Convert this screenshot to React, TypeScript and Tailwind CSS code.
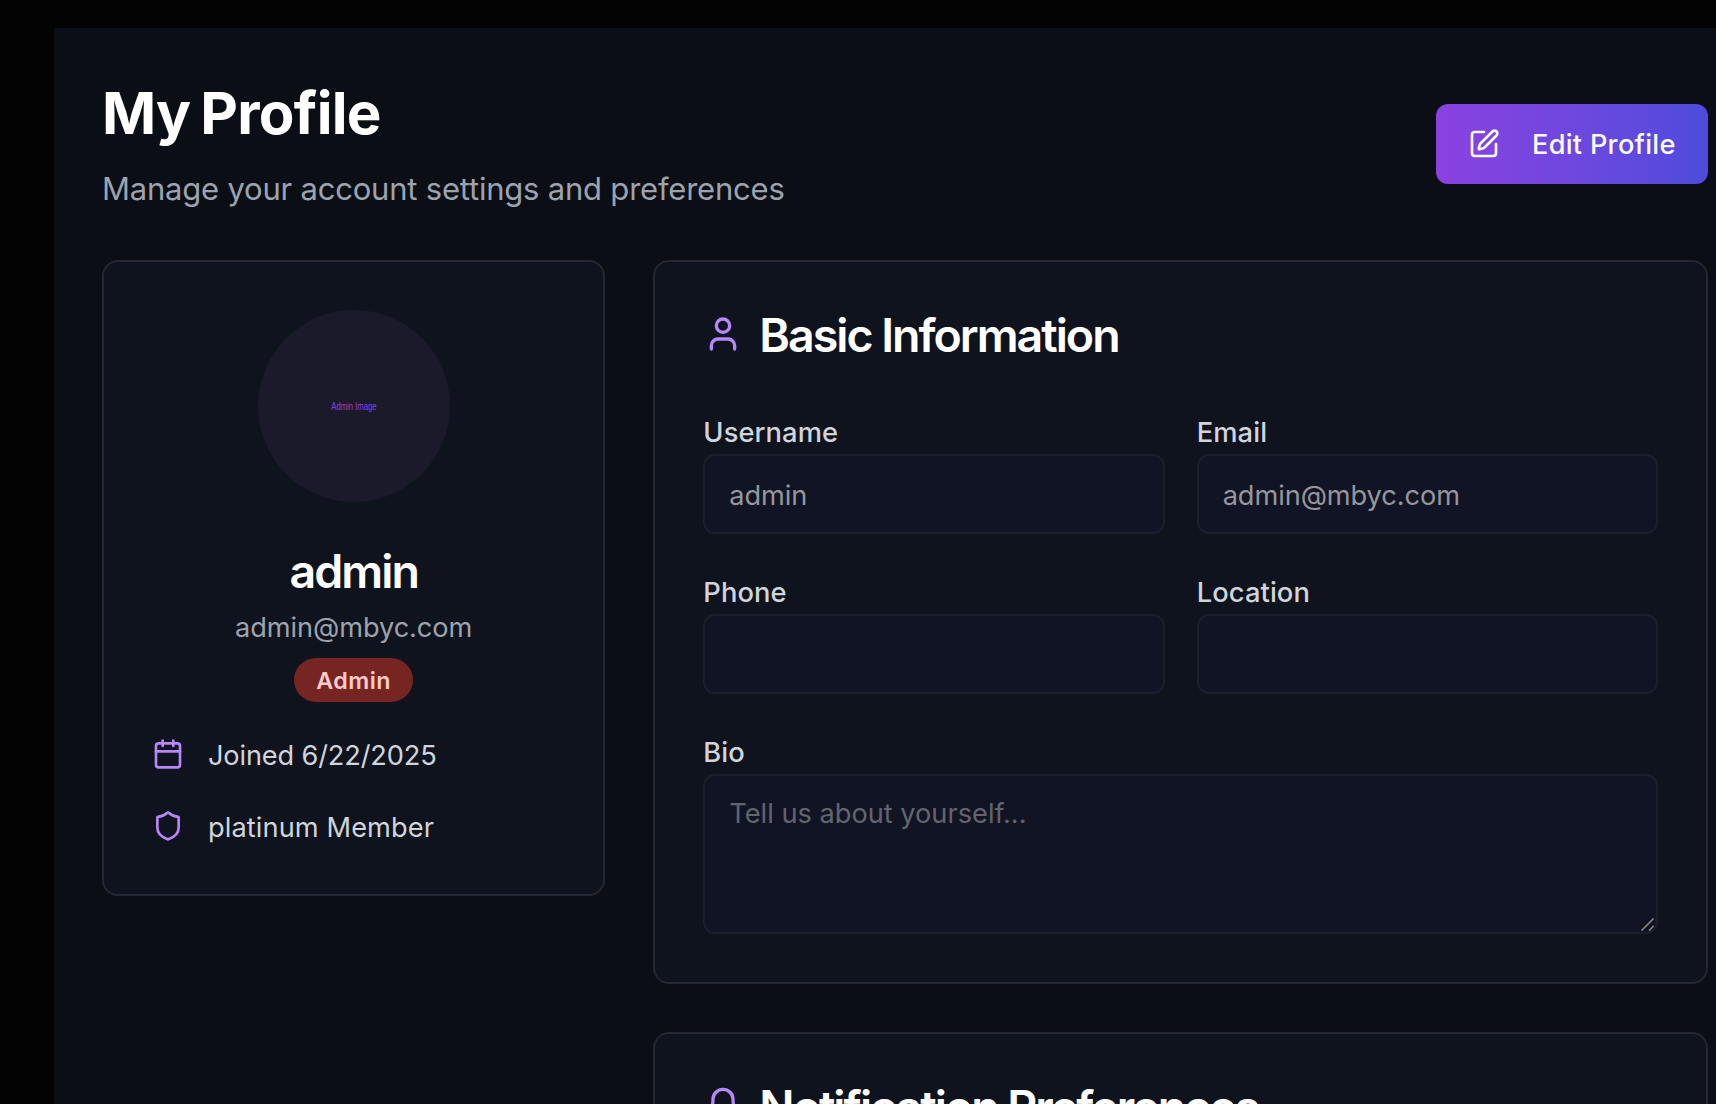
import React from "react";
import { Bell, Calendar, Shield, SquarePen, User } from "lucide-react";

function Card({ className = "", children }: { className?: string; children: React.ReactNode }) {
  return (
    <section className={`rounded-[16px] border-2 border-[#232834] bg-[#0f131d] p-12 ${className}`}>
      {children}
    </section>
  );
}

function CardTitle({ icon, children }: { icon: React.ReactNode; children: React.ReactNode }) {
  return (
    <h2 className="flex h-12 items-center gap-4 whitespace-nowrap text-[46.5px] font-semibold leading-[48px] tracking-[-2px] text-white">
      {icon}
      <span className="pt-[2px]">{children}</span>
    </h2>
  );
}

function Label({ htmlFor, children }: { htmlFor: string; children: React.ReactNode }) {
  return (
    <div className="h-12 pt-px text-[32px] leading-[48px]">
      <label
        htmlFor={htmlFor}
        className="text-[27.3px] font-medium leading-none tracking-[0.1px] text-[#d1d5db]"
      >
        {children}
      </label>
    </div>
  );
}

function Field({ id, label, value = "" }: { id: string; label: string; value?: string }) {
  return (
    <div className="min-w-0">
      <Label htmlFor={id}>{label}</Label>
      <input
        id={id}
        disabled
        value={value}
        readOnly
        className="block h-20 w-full rounded-[12px] border-2 border-[#1b1f2c] bg-[#111424] px-6 pt-[2px] text-[27.2px] leading-10 tracking-[-0.08px] text-[#96979c]"
      />
    </div>
  );
}

export default function App() {
  return (
    <div className="h-[1104px] w-full overflow-hidden bg-[#030303] pl-[54px] pt-7 font-['Inter',sans-serif]">
      <main className="h-full bg-[#0b0e15] pl-12 pr-2 pt-12">
        <header className="flex items-center justify-between">
          <div>
            <h1 className="h-[72px] pt-px text-[58.2px] font-bold leading-[72px] tracking-[-0.75px] text-white [word-spacing:-3px]">
              My Profile
            </h1>
            <p className="mt-4 h-12 pt-px text-[31px] leading-[48px] tracking-[-0.21px] text-[#9ca3af]">
              Manage your account settings and preferences
            </p>
          </div>
          <button className="flex h-20 w-[272px] items-center gap-8 whitespace-nowrap rounded-[12px] bg-linear-to-r from-[#8b41e1] to-[#4d4bdc] px-8 text-[27.2px] font-medium tracking-[0.27px] text-[#f8fafc]">
            <SquarePen size={32} className="shrink-0" />
            <span className="pt-[3px]">Edit Profile</span>
          </button>
        </header>

        <div className="mt-12 grid grid-cols-3 items-start gap-12">
          <Card>
            <div className="flex flex-col items-center">
              <div className="flex size-48 items-center justify-center rounded-full bg-[#1a1a2b]">
                <span className="scale-x-73 whitespace-nowrap font-['Liberation_Sans',sans-serif] text-[10.5px] leading-none text-[#8a3fec]">
                  Admin Image
                </span>
              </div>
              <h2 className="mt-11 h-12 pt-px text-[46.5px] font-semibold leading-[48px] tracking-[-1.95px] text-white">
                admin
              </h2>
              <p className="mt-3 h-10 pt-[2px] text-[27.2px] leading-10 tracking-[-0.08px] text-[#9ca3af]">
                admin@mbyc.com
              </p>
              <span className="mt-3 flex h-11 w-[119px] items-center justify-center rounded-full bg-[#772522] pt-[2px] text-[23.3px] font-semibold tracking-[0.45px] text-[#fecaca]">
                Admin
              </span>
            </div>
            <ul className="mt-8 flex flex-col gap-8 text-[27.2px] leading-10 text-[#d1d5db]">
              <li className="flex h-10 items-center gap-6">
                <Calendar size={32} className="text-[#b786f8]" />
                <span className="pt-[4px] tracking-[-0.16px]">Joined 6/22/2025</span>
              </li>
              <li className="flex h-10 items-center gap-6">
                <Shield size={32} className="text-[#b786f8]" />
                <span className="pt-[4px] tracking-[0.1px]">platinum Member</span>
              </li>
            </ul>
          </Card>

          <div className="col-span-2 flex flex-col gap-12">
            <Card>
              <CardTitle icon={<User size={40} className="shrink-0 text-[#b786f8]" />}>
                Basic Information
              </CardTitle>
              <div className="mt-12 flex flex-col gap-8">
                <div className="grid grid-cols-2 gap-8">
                  <Field id="username" label="Username" value="admin" />
                  <Field id="email" label="Email" value="admin@mbyc.com" />
                  <Field id="phone" label="Phone" />
                  <Field id="location" label="Location" />
                </div>
                <div>
                  <Label htmlFor="bio">Bio</Label>
                  <div className="relative">
                    <textarea
                      id="bio"
                      disabled
                      placeholder="Tell us about yourself..."
                      className="block h-40 w-full resize-none rounded-[12px] border-2 border-[#1b1f2c] bg-[#111424] px-6 pb-4 pt-[18px] text-[27.2px] leading-10 placeholder:text-[#63656d]"
                    />
                    <svg
                      className="absolute bottom-[3px] right-[3px] size-4"
                      viewBox="0 0 16 16"
                      fill="none"
                      strokeWidth="1.7"
                    >
                      <path stroke="#090a12" d="M1.2 14.8 14.2 1.8M8.7 14.8l5.5-5.5" />
                      <path stroke="#7f8084" d="M2.4 15.6 14.6 3.4M9.9 15.6l4.7-4.7" />
                    </svg>
                  </div>
                </div>
              </div>
            </Card>
            <Card className="h-[400px]">
              <CardTitle icon={<Bell size={40} className="shrink-0 text-[#b786f8]" />}>
                Notification Preferences
              </CardTitle>
            </Card>
          </div>
        </div>
      </main>
    </div>
  );
}
